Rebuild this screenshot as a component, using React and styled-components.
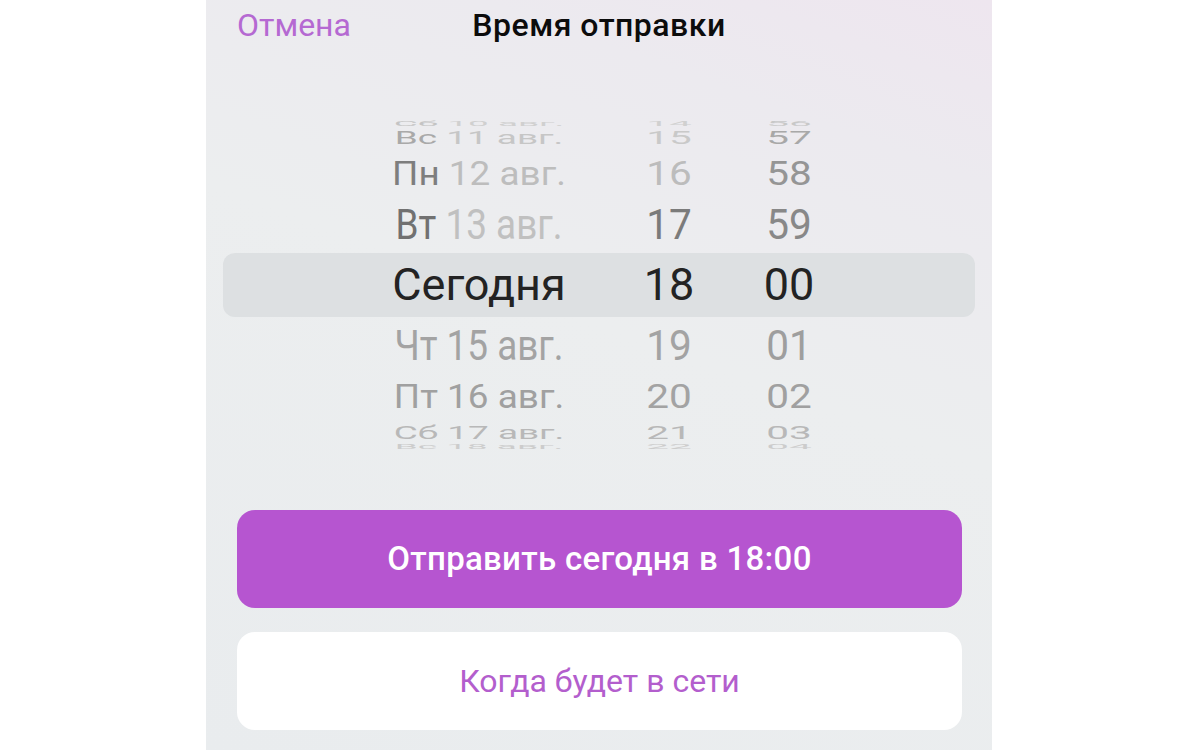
import React from 'react';
import styled, { createGlobalStyle } from 'styled-components';

const GlobalStyle = createGlobalStyle`
  html, body {
    margin: 0;
    padding: 0;
    background: #ffffff;
    font-family: Roboto, 'Noto Sans', sans-serif;
  }
`;

const Page = styled.div`
  width: 1200px;
  height: 750px;
  display: flex;
  justify-content: center;
  overflow: hidden;
  background: #ffffff;
`;

const Sheet = styled.div`
  width: 786px;
  height: 750px;
  margin-right: 2px;
  display: flex;
  flex-direction: column;
  background: linear-gradient(200deg, #eee6ef 0%, #eceaef 18%, #eceeef 45%, #e9ecee 100%);
`;

const Header = styled.div`
  height: 50px;
  display: grid;
  grid-template-columns: 1fr auto 1fr;
  align-items: center;
  padding: 0 31px;
`;

const Cancel = styled.span`
  color: #b569d2;
  font-size: 32px;
  font-weight: 400;
`;

const Title = styled.span`
  color: #0c0c0c;
  font-size: 32px;
  font-weight: 500;
  letter-spacing: 0.5px;
`;

const Picker = styled.div`
  position: relative;
  margin-top: 71px;
  display: flex;
  flex-direction: column;
`;

const Band = styled.div`
  position: absolute;
  left: 17px;
  right: 17px;
  top: 132px;
  height: 64px;
  border-radius: 12px;
  background: #dde0e2;
`;

const Row = styled.div`
  position: relative;
  display: flex;
  justify-content: center;
  align-items: center;
`;

const Cell = styled.div`
  flex: 0 0 ${p => p.$width}px;
  text-align: center;
  font-size: 45px;
  line-height: 45px;
  height: 45px;
  white-space: nowrap;
  color: ${p => p.$color};
`;

const Day = styled.span`
  color: ${p => p.$color};
`;

const Actions = styled.div`
  margin-top: 61px;
  padding: 0 30px 0 31px;
  display: flex;
  flex-direction: column;
  gap: 24px;
`;

const Button = styled.button`
  height: 98px;
  border: none;
  border-radius: 18px;
  font-family: Roboto, 'Noto Sans', sans-serif;
  font-size: ${p => (p.$primary ? 33 : 32)}px;
  font-weight: ${p => (p.$primary ? 500 : 400)};
  letter-spacing: ${p => (p.$primary ? 0.3 : 0)}px;
  color: ${p => (p.$primary ? '#ffffff' : '#b35ecd')};
  background: ${p => (p.$primary ? '#b655d0' : '#ffffff')};
`;

const R = 164;
const STEP = (22 * Math.PI) / 180;

const rows = [
  { k: -4, day: 'Сб', date: '10 авг.', hour: '14', min: '56', dayC: '#c4c4c4', dateC: '#d0d0d0', hourC: '#d0d0d0', minC: '#c8c8c8' },
  { k: -3, day: 'Вс', date: '11 авг.', hour: '15', min: '57', dayC: '#a9a9a9', dateC: '#c6c6c6', hourC: '#c9c9c9', minC: '#a8a8a8' },
  { k: -2, day: 'Пн', date: '12 авг.', hour: '16', min: '58', dayC: '#7e7e7e', dateC: '#bdbdbd', hourC: '#bcbcbc', minC: '#959595' },
  { k: -1, day: 'Вт', date: '13 авг.', hour: '17', min: '59', dayC: '#717171', dateC: '#c0c0c0', hourC: '#7b7b7b', minC: '#888888' },
  { k: 0, day: '', date: 'Сегодня', hour: '18', min: '00', dayC: '#232323', dateC: '#232323', hourC: '#232323', minC: '#232323' },
  { k: 1, day: 'Чт', date: '15 авг.', hour: '19', min: '01', dayC: '#a3a3a3', dateC: '#a3a3a3', hourC: '#a3a3a3', minC: '#9e9e9e' },
  { k: 2, day: 'Пт', date: '16 авг.', hour: '20', min: '02', dayC: '#a0a0a0', dateC: '#a0a0a0', hourC: '#a3a3a3', minC: '#a0a0a0' },
  { k: 3, day: 'Сб', date: '17 авг.', hour: '21', min: '03', dayC: '#b8b8b8', dateC: '#b8b8b8', hourC: '#b8b8b8', minC: '#b8b8b8' },
  { k: 4, day: 'Вс', date: '18 авг.', hour: '22', min: '04', dayC: '#cccccc', dateC: '#cccccc', hourC: '#cccccc', minC: '#cccccc' },
];

const clampAngle = a => Math.max(-Math.PI / 2, Math.min(Math.PI / 2, a));

const rowHeight = k => {
  const top = Math.sin(clampAngle((k - 0.5) * STEP));
  const bottom = Math.sin(clampAngle((k + 0.5) * STEP));
  return R * (bottom - top);
};

export default function App() {
  return (
    <>
      <GlobalStyle />
      <Page>
        <Sheet>
          <Header>
            <Cancel>Отмена</Cancel>
            <Title>Время отправки</Title>
            <span />
          </Header>

          <Picker>
            <Band />
            {rows.map(r => {
              const sy = Math.max(0.14, Math.cos(r.k * STEP));
              const sx = r.k === 0 ? 1 : 0.82;
              const dateStyle = { transform: `scale(${sx}, ${sy})` };
              const numStyle = { transform: `scale(${r.k === 0 ? 1 : 0.9}, ${sy})` };
              return (
                <Row key={r.k} style={{ height: `${rowHeight(r.k)}px` }}>
                  <Cell $width={250} $color={r.dateC} style={dateStyle}>
                    {r.day && <Day $color={r.dayC}>{r.day} </Day>}
                    {r.date}
                  </Cell>
                  <Cell $width={130} $color={r.hourC} style={numStyle}>{r.hour}</Cell>
                  <Cell $width={110} $color={r.minC} style={numStyle}>{r.min}</Cell>
                </Row>
              );
            })}
          </Picker>

          <Actions>
            <Button $primary>Отправить сегодня в 18:00</Button>
            <Button>Когда будет в сети</Button>
          </Actions>
        </Sheet>
      </Page>
    </>
  );
}
